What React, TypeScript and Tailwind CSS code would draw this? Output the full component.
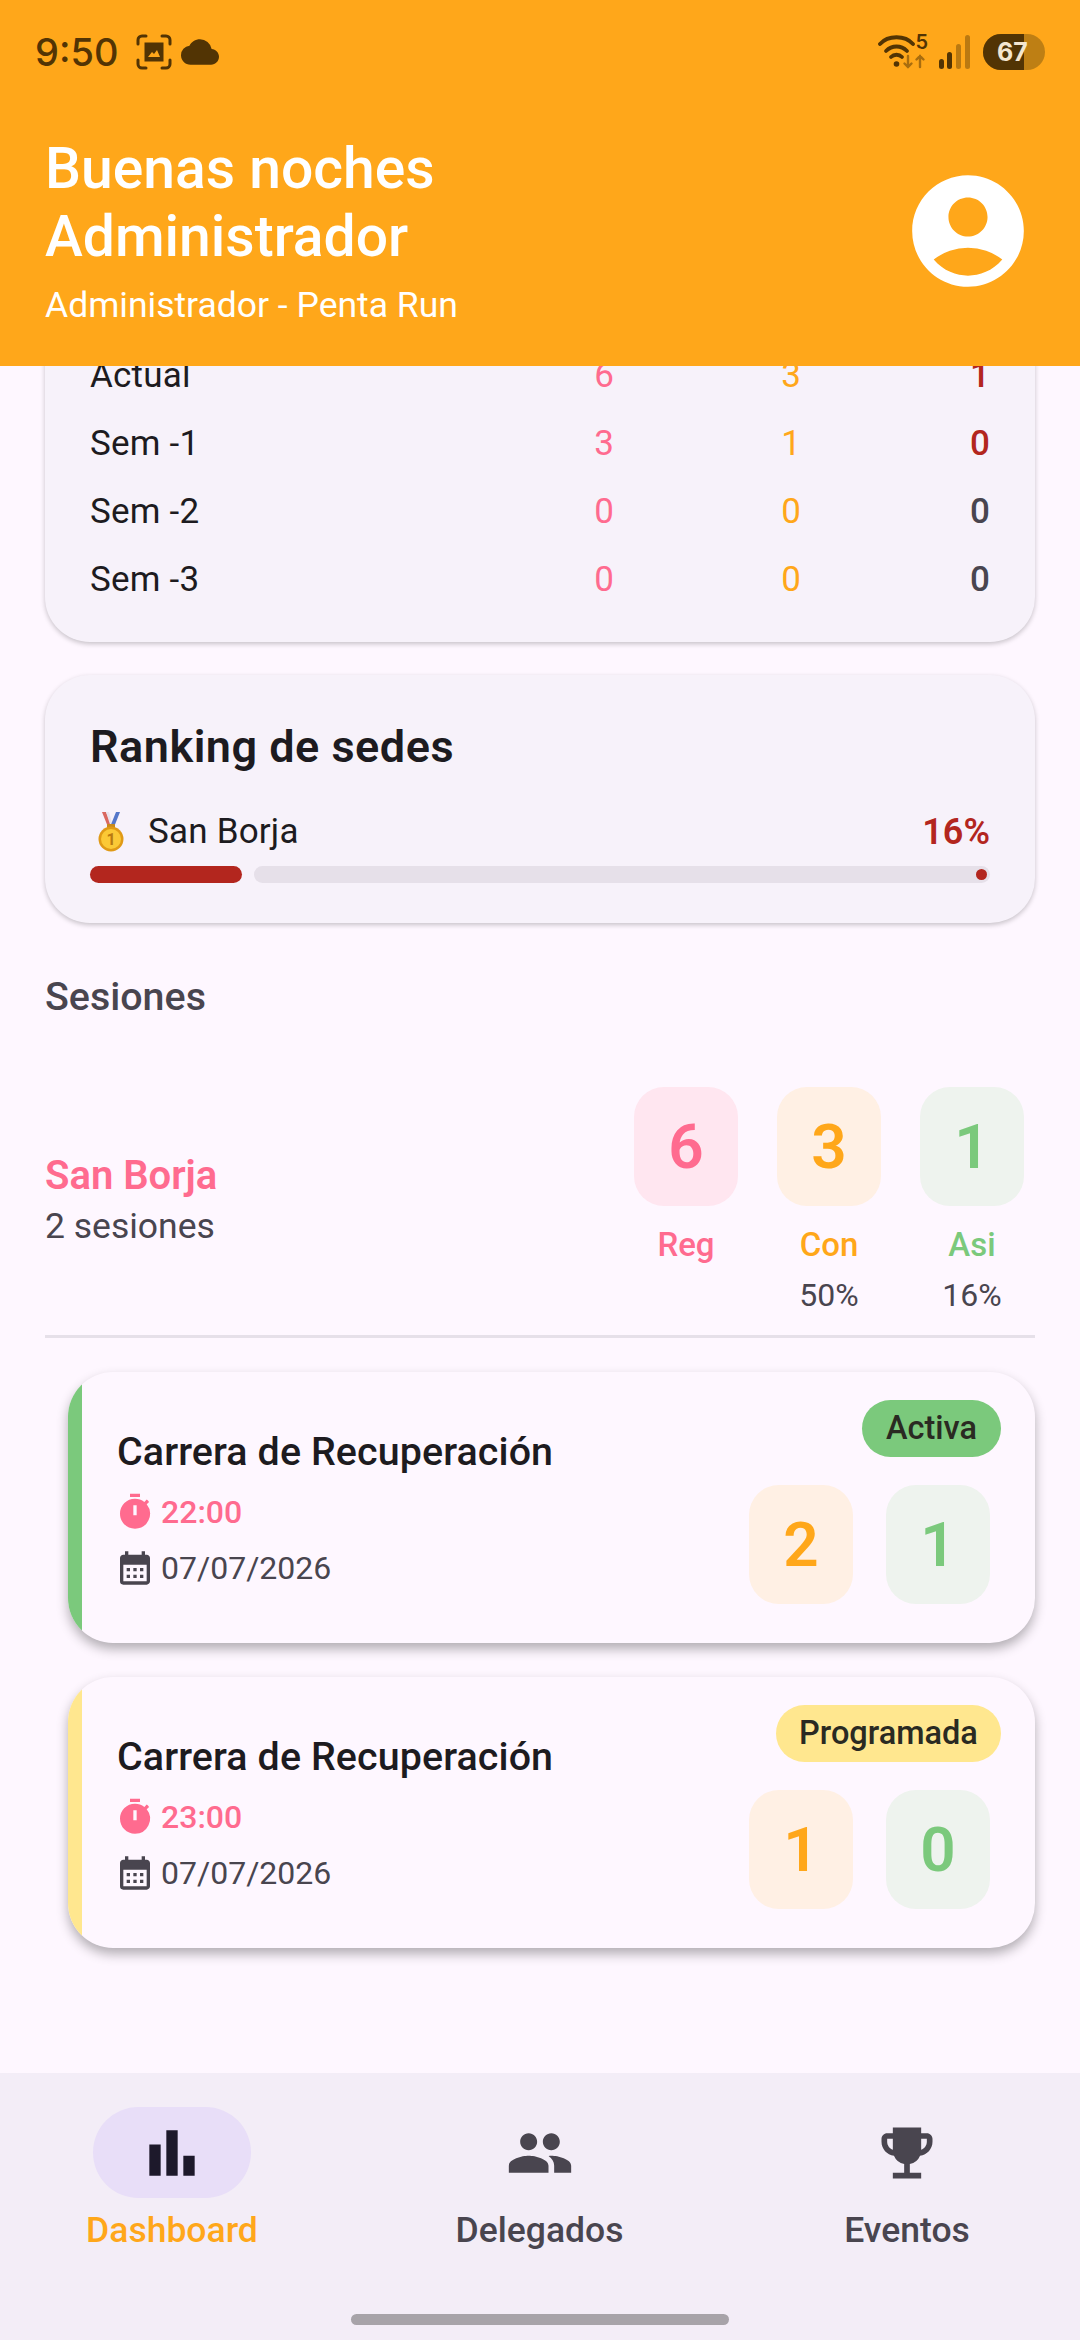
import { MdAccountCircle, MdBarChart, MdCalendarMonth, MdCloud, MdEmojiEvents, MdPeople, MdTimer } from "react-icons/md";

const weeks = [
  { label: "Actual", reg: 6, con: 3, asi: 1, asiClass: "text-[#B3261E] font-medium" },
  { label: "Sem -1", reg: 3, con: 1, asi: 0, asiClass: "text-[#B3261E] font-medium" },
  { label: "Sem -2", reg: 0, con: 0, asi: 0, asiClass: "text-[#49454F] font-medium" },
  { label: "Sem -3", reg: 0, con: 0, asi: 0, asiClass: "text-[#49454F] font-medium" },
];

const sessions = [
  { time: "22:00", status: "Activa", con: 2, asi: 1, stripe: "bg-[#7BC97C]", badge: "bg-[#7BC97C] w-[139px]" },
  { time: "23:00", status: "Programada", con: 1, asi: 0, stripe: "bg-[#FFE78F]", badge: "bg-[#FFE78F] w-[225px]" },
];

function StatusBar() {
  return (
    <div className="flex h-[104px] items-center justify-between pl-[35px] pr-[35px] text-[#523404]">
      <div className="flex items-center">
        <span className="font-[Inter,sans-serif] text-[38px] font-medium">9:50</span>
        <svg className="ml-[18px]" width="36" height="36" viewBox="0 0 36 36" fill="none" stroke="currentColor" strokeWidth="3" strokeLinecap="round">
          <path d="M2 10V6a4 4 0 0 1 4-4h4M26 2h4a4 4 0 0 1 4 4v4M34 26v4a4 4 0 0 1-4 4h-4M10 34H6a4 4 0 0 1-4-4v-4" />
          <path d="M10 10h16v16H10z" fill="currentColor" strokeLinecap="butt" />
          <path d="M12 23l4-5 2 2 3-4 3 7z" fill="#FFA71A" stroke="none" />
        </svg>
        <MdCloud className="ml-[9px] text-[38px]" />
      </div>
      <div className="flex items-center">
        <svg width="50" height="36" viewBox="0 0 50 36" fill="none" stroke="currentColor" strokeWidth="3.8" strokeLinecap="round">
          <path d="M2 10C10 1 27 1 35 10" />
          <path d="M8 17c6-6 15-6 21 0" />
          <path d="M13 23c3-3 8-3 11 0" />
          <circle cx="18.5" cy="30" r="2.8" fill="currentColor" stroke="none" />
          <path d="M30 22v11m-3.5-3.5L30 33l3.5-3.5M42 33V22m-3.500 3.500L42 22l3.500 3.500" strokeWidth="2.400" opacity="0.5" />
        </svg>
        <span className="ml-[-13px] mt-[-21px] font-[Inter,sans-serif] text-[20px] font-semibold leading-none">5</span>
        <svg className="ml-[11px]" width="32" height="34" viewBox="0 0 32 34" fill="currentColor">
          <rect x="0" y="24" width="5" height="10" rx="2.500" />
          <rect x="8" y="17" width="5" height="17" rx="2.500" />
          <rect x="17" y="9" width="5" height="25" rx="2.500" opacity="0.4" />
          <rect x="26" y="0" width="5" height="34" rx="2.500" opacity="0.4" />
        </svg>
        <div className="relative ml-[12px] h-[36px] w-[62px] overflow-hidden rounded-full bg-[#BE7F14]">
          <div className="h-full w-[41px] bg-[#523404]" />
          <span className="absolute left-[14px] top-0 font-[Inter,sans-serif] text-[25px] font-bold leading-[36px] text-[#F5E6CF]">67</span>
        </div>
      </div>
    </div>
  );
}

function Medal() {
  return (
    <svg width="28" height="40" viewBox="0 0 28 40" className="ml-[7px]">
      <path d="M5 0h4l6 15h-4z" fill="#D9685F" />
      <path d="M9 0h3l3 11-1.500 3z" fill="#E8E4EE" />
      <path d="M23 0h-4l-6 15h4z" fill="#5577C9" />
      <rect x="10" y="12" width="8" height="5" rx="1" fill="#C98A1B" />
      <circle cx="14" cy="27" r="12.500" fill="#E09A16" />
      <circle cx="14" cy="27" r="10" fill="#FBC936" />
      <text x="14" y="33" textAnchor="middle" fontSize="16" fontWeight="700" fill="#B97A10">1</text>
    </svg>
  );
}

function StatBox({ value, className }: { value: number; className: string }) {
  return (
    <div className={`flex h-[119px] w-[104px] items-center justify-center rounded-[30px] text-[62px] font-semibold ${className}`}>
      {value}
    </div>
  );
}

function SessionCard({ s }: { s: (typeof sessions)[number] }) {
  return (
    <div className="ml-[23px] flex h-[271px] overflow-hidden rounded-[45px] bg-[#FEF7FF] shadow-[0_6px_12px_rgba(0,0,0,0.3)]">
      <div className={`w-[14px] shrink-0 ${s.stripe}`} />
      <div className="flex-1 pl-[35px] pt-[57px]">
        <div className="text-[39.400px] font-medium leading-[46px] tracking-[0.100px] text-[#1D1B20]">Carrera de Recuperación</div>
        <div className="mt-[16px] flex h-[42px] items-center text-[#FF6B8F]">
          <MdTimer className="ml-[-2px] text-[40px]" />
          <span className="ml-[6px] text-[32px] font-medium">{s.time}</span>
        </div>
        <div className="mt-[14px] flex h-[42px] items-center text-[#49454F]">
          <MdCalendarMonth className="ml-[-2px] text-[40px]" />
          <span className="ml-[6px] text-[32px]">07/07/2026</span>
        </div>
      </div>
      <div className="flex flex-col items-end pr-[34px] pt-[28px]">
        <div className={`flex h-[57px] items-center justify-center rounded-full text-[32.500px] font-medium text-[#2A2A22] ${s.badge}`}>
          {s.status}
        </div>
        <div className="mr-[11px] mt-[28px] flex gap-[33px]">
          <StatBox value={s.con} className="bg-[#FFF0E4] text-[#FFA71A]" />
          <StatBox value={s.asi} className="bg-[#EEF3EE] text-[#7BC97C]" />
        </div>
      </div>
    </div>
  );
}

export default function App() {
  return (
    <div className="flex h-[2340px] w-[1080px] flex-col overflow-hidden bg-[#FEF7FF] font-[Roboto,sans-serif]">
      {/* Header */}
      <div className="relative z-10 h-[366px] shrink-0 bg-[#FFA71A] text-white">
        <StatusBar />
        <div className="flex items-start justify-between pl-[45px] pr-[45px] pt-[31px]">
          <div>
            <div className="text-[57px] font-medium leading-[68px]">Buenas noches</div>
            <div className="text-[57px] font-medium leading-[68px]">Administrador</div>
            <div className="mt-[14px] text-[35.500px] leading-[40px]">Administrador - Penta Run</div>
          </div>
          <MdAccountCircle className="mt-[29px] text-[134px]" />
        </div>
      </div>

      {/* Scrolled content */}
      <div className="flex-1 overflow-hidden px-[45px]">
        <div className="-mt-[100px] rounded-[45px] bg-[#F7F2FA] px-[45px] pb-[28px] pt-[76px] shadow-[0_2px_5px_rgba(0,0,0,0.22)]">
          {weeks.map((w) => (
            <div key={w.label} className="flex h-[68px] items-center text-[35px]">
              <div className="flex-1 font-[450] tracking-[0.200px] text-[#1D1B20]">{w.label}</div>
              <div className="w-[60px] text-right text-[#FF6B8F]">{w.reg}</div>
              <div className="w-[187px] text-right text-[#FFA71A]">{w.con}</div>
              <div className={`w-[189px] text-right ${w.asiClass}`}>{w.asi}</div>
            </div>
          ))}
        </div>

        <div className="mt-[33px] h-[248px] rounded-[45px] bg-[#F7F2FA] px-[45px] pt-[48px] shadow-[0_2px_5px_rgba(0,0,0,0.22)]">
          <div className="text-[45px] font-semibold leading-[48px] tracking-[0.500px] text-[#1D1B20]">Ranking de sedes</div>
          <div className="mt-[39px] flex h-[44px] items-center justify-between text-[35px]">
            <div className="flex items-center">
              <Medal />
              <span className="ml-[23px] font-[450] tracking-[0.200px] text-[#1D1B20]">San Borja</span>
            </div>
            <span className="text-[36px] font-semibold text-[#B3261E]">16%</span>
          </div>
          <div className="mt-[12px] flex h-[17px] gap-[12px]">
            <div className="w-[152px] rounded-full bg-[#B3261E]" />
            <div className="flex flex-1 items-center justify-end rounded-full bg-[#E6E0E9] pr-[3px]">
              <div className="h-[11px] w-[11px] rounded-full bg-[#B3261E]" />
            </div>
          </div>
        </div>

        <div className="mt-[54px] text-[39.400px] font-medium leading-[40px] text-[#49454F]">Sesiones</div>

        {/* Sede summary */}
        <div className="mt-[70px] flex justify-between pr-[11px]">
          <div className="pt-[62px]">
            <div className="text-[40px] font-semibold leading-[54px] text-[#FF6B8F]">San Borja</div>
            <div className="mt-[-2px] text-[35.500px] leading-[50px] text-[#49454F]">2 sesiones</div>
          </div>
          <div className="flex gap-[39px] text-center">
            {[
              { value: 6, label: "Reg", pct: "\u00a0", box: "bg-[#FFE6F0] text-[#FF6B8F]", text: "text-[#FF6B8F]" },
              { value: 3, label: "Con", pct: "50%", box: "bg-[#FFF0E4] text-[#FFA71A]", text: "text-[#FFA71A]" },
              { value: 1, label: "Asi", pct: "16%", box: "bg-[#EEF3EE] text-[#7BC97C]", text: "text-[#7BC97C]" },
            ].map((c) => (
              <div key={c.label} className="w-[104px]">
                <StatBox value={c.value} className={c.box} />
                <div className={`mt-[21px] text-[33px] font-medium leading-[36px] ${c.text}`}>{c.label}</div>
                <div className="mt-[14px] text-[32px] leading-[36px] text-[#49454F]">{c.pct}</div>
              </div>
            ))}
          </div>
        </div>
        <div className="mt-[22px] h-[3px] bg-[#E6E0E9]" />

        <div className="mt-[34px] flex flex-col gap-[34px]">
          {sessions.map((s) => (
            <SessionCard key={s.time} s={s} />
          ))}
        </div>
      </div>

      {/* Bottom navigation */}
      <div className="flex h-[267px] shrink-0 flex-col bg-[#F3EDF7]">
        <div className="flex flex-1 justify-between pl-[72px] pr-[73px] pt-[34px]">
          <div className="flex w-[200px] flex-col items-center">
            <div className="flex h-[91px] w-[158px] items-center justify-center rounded-full bg-[#E8DEF8] text-[#1D192B]">
              <MdBarChart className="text-[68px]" />
            </div>
            <div className="mt-[14px] text-[35.500px] font-medium leading-[36px] text-[#FFA71A]">Dashboard</div>
          </div>
          <div className="flex w-[200px] flex-col items-center">
            <div className="flex h-[91px] items-center justify-center text-[#49454F]">
              <MdPeople className="text-[68px]" />
            </div>
            <div className="mt-[14px] text-[35.500px] font-medium leading-[36px] text-[#49454F]">Delegados</div>
          </div>
          <div className="flex w-[200px] flex-col items-center">
            <div className="flex h-[91px] items-center justify-center text-[#49454F]">
              <MdEmojiEvents className="text-[68px]" />
            </div>
            <div className="mt-[14px] text-[35.500px] font-medium leading-[36px] text-[#49454F]">Eventos</div>
          </div>
        </div>
        <div className="mb-[15px] h-[11px] w-[378px] self-center rounded-full bg-[#A7A3A9]" />
      </div>
    </div>
  );
}
